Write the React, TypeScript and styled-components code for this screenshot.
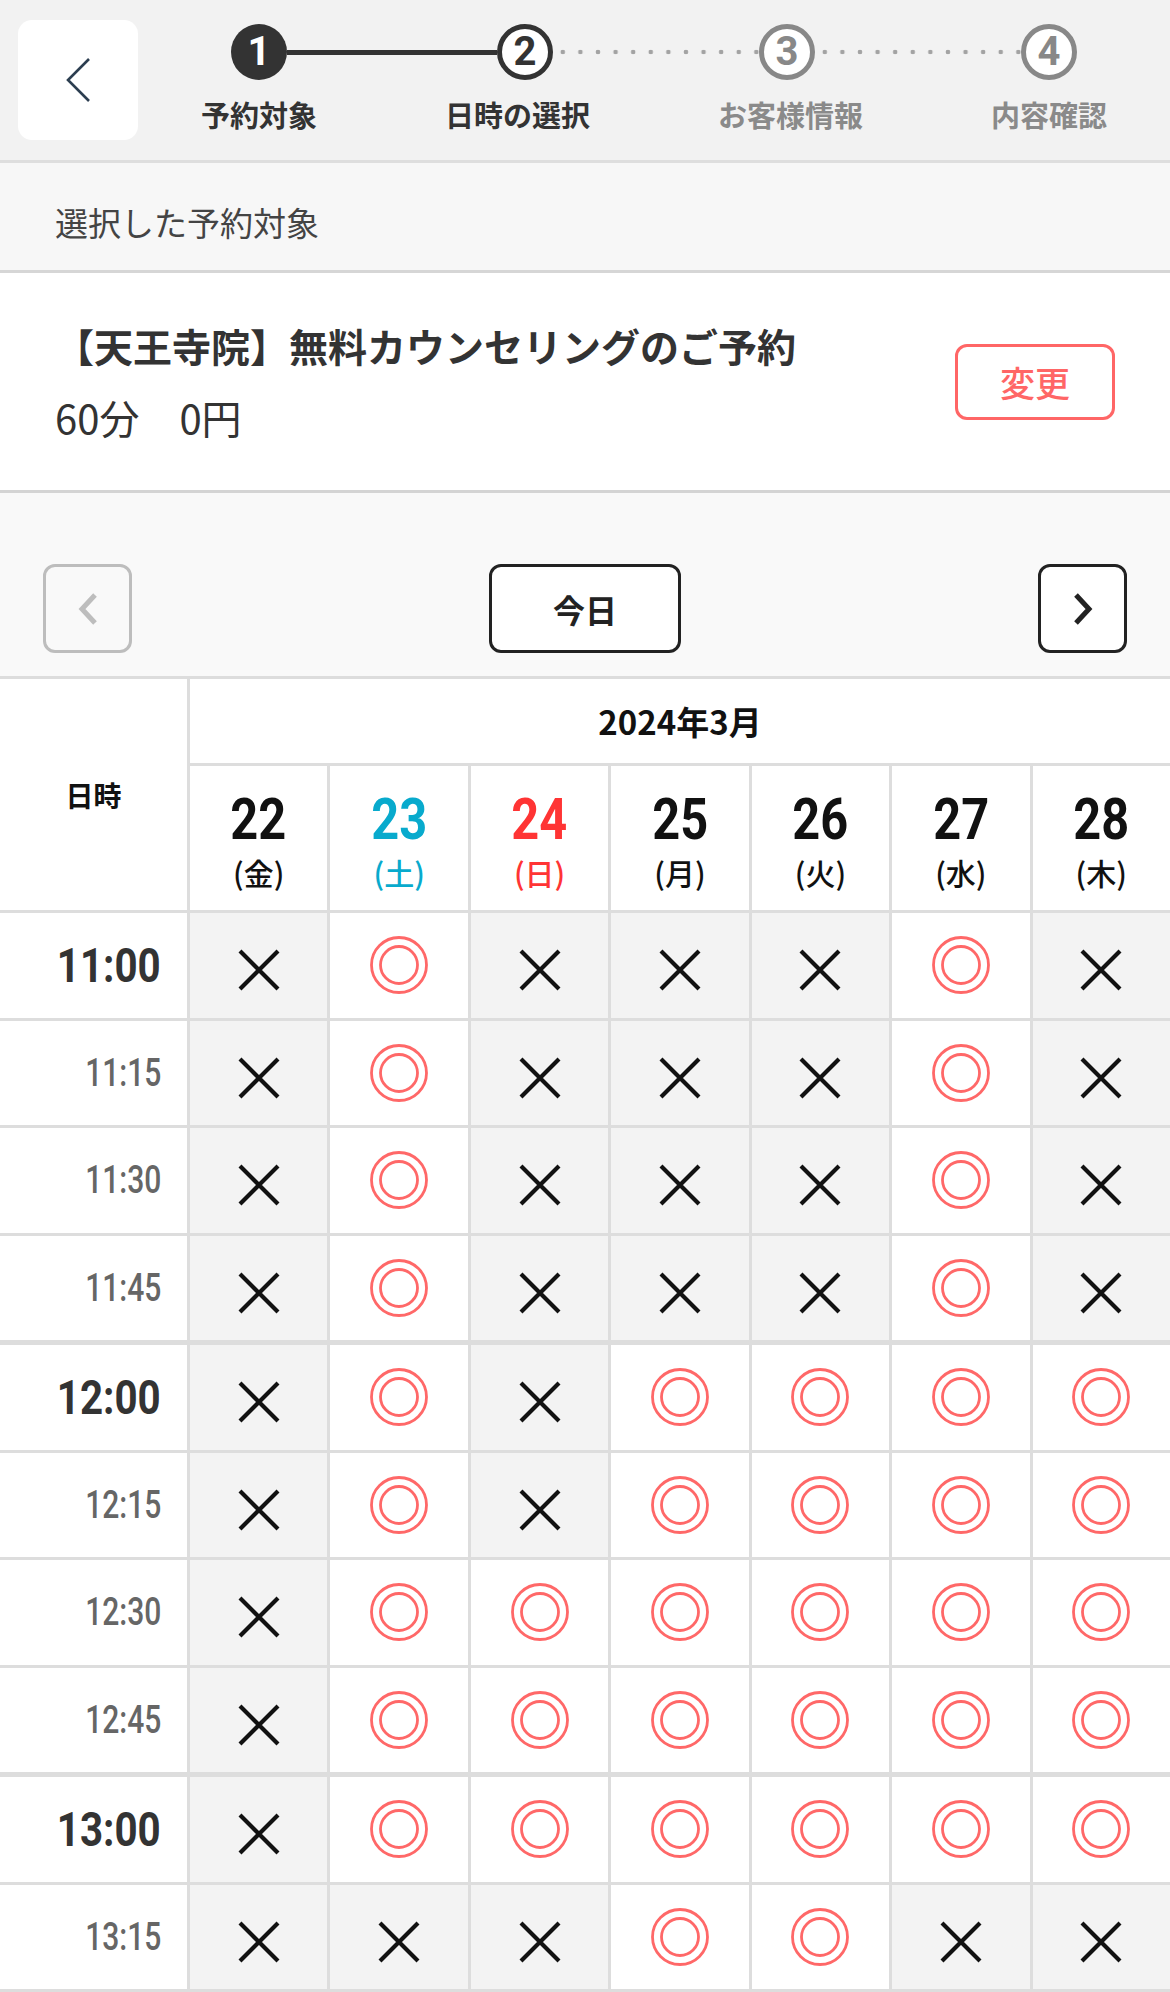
import React from 'react';
import styled, { createGlobalStyle, css } from 'styled-components';

type Slot = 'o' | 'x';

interface IDay {
	date: string;
	weekday: string;
	tone: 'plain' | 'sat' | 'sun';
}

interface IRow {
	time: string;
	slots: Slot[];
}

const days: IDay[] = [
	{ date: '22', tone: 'plain', weekday: '金' },
	{ date: '23', tone: 'sat', weekday: '土' },
	{ date: '24', tone: 'sun', weekday: '日' },
	{ date: '25', tone: 'plain', weekday: '月' },
	{ date: '26', tone: 'plain', weekday: '火' },
	{ date: '27', tone: 'plain', weekday: '水' },
	{ date: '28', tone: 'plain', weekday: '木' }
];

const parse = (s: string): Slot[] => s.split('') as Slot[];

const rows: IRow[] = [
	{ slots: parse('xoxxxox'), time: '11:00' },
	{ slots: parse('xoxxxox'), time: '11:15' },
	{ slots: parse('xoxxxox'), time: '11:30' },
	{ slots: parse('xoxxxox'), time: '11:45' },
	{ slots: parse('xoxoooo'), time: '12:00' },
	{ slots: parse('xoxoooo'), time: '12:15' },
	{ slots: parse('xoooooo'), time: '12:30' },
	{ slots: parse('xoooooo'), time: '12:45' },
	{ slots: parse('xoooooo'), time: '13:00' },
	{ slots: parse('xxxooxx'), time: '13:15' }
];

const steps = [
	{ label: '予約対象', num: '1', state: 'done' },
	{ label: '日時の選択', num: '2', state: 'current' },
	{ label: 'お客様情報', num: '3', state: 'todo' },
	{ label: '内容確認', num: '4', state: 'todo' }
] as const;

type StepState = typeof steps[number]['state'];

const toneColor = { plain: '#111', sat: '#08aacd', sun: '#ff3434' };

const GlobalStyle = createGlobalStyle`
	html, body { margin: 0; padding: 0; background: #fff; }
	body { font-family: 'Noto Sans CJK JP', 'Noto Sans', sans-serif; color: #333; }
	* { box-sizing: border-box; }
	button { font-family: inherit; cursor: pointer; }
`;

const Page = styled.div`
	width: 1170px;
`;

/* ---------- header / stepper ---------- */

const Header = styled.header`
	display: flex;
	height: 163px;
	padding: 20px 0 0 18px;
	background: #f2f2f2;
	border-bottom: 3px solid #dedede;
`;

const BackButton = styled.button`
	flex: none;
	width: 120px;
	height: 120px;
	padding: 0;
	border: none;
	border-radius: 14px;
	background: #fff;
	display: flex;
	align-items: center;
	justify-content: center;
`;

const Stepper = styled.div`
	flex: 1;
	padding: 4px 63px 0;
	display: flex;
	flex-direction: column;
`;

const CircleRow = styled.div`
	display: flex;
	align-items: center;
	padding: 0 30px;
`;

const StepCircle = styled.div<{ $state: StepState }>`
	flex: none;
	width: 56px;
	height: 56px;
	border-radius: 50%;
	display: flex;
	align-items: center;
	justify-content: center;
	font-family: Roboto, 'Liberation Sans', sans-serif;
	font-weight: 700;
	font-size: 40px;
	line-height: 1;
	${({ $state }) => $state === 'done' && css`
		background: #333;
		color: #fff;
	`}
	${({ $state }) => $state === 'current' && css`
		background: #fff;
		border: 5px solid #333;
		color: #333;
	`}
	${({ $state }) => $state === 'todo' && css`
		background: #fff;
		border: 5px solid #888;
		color: #888;
	`}
`;

const Connector = styled.div<{ $solid: boolean }>`
	flex: 1;
	${({ $solid }) => $solid
		? css`
			height: 5px;
			background: #333;
		`
		: css`
			height: 6px;
			margin: 0 -2px;
			background: radial-gradient(circle, #a3a3a3 2px, transparent 2.6px) 3px center / 17.6px 6px repeat-x;
		`}
`;

const LabelRow = styled.div`
	display: flex;
	justify-content: space-between;
	margin-top: 15px;
`;

const StepLabel = styled.span<{ $muted: boolean }>`
	font-size: 29px;
	line-height: 39px;
	font-weight: 700;
	color: ${({ $muted }) => ($muted ? '#8a8a8a' : '#333')};
`;

/* ---------- selected target ---------- */

const SectionBar = styled.div`
	height: 110px;
	padding: 10px 0 0 55px;
	display: flex;
	align-items: center;
	background: #f7f7f7;
	border-bottom: 3px solid #d6d6d6;
	font-size: 33px;
	color: #444;
`;

const Card = styled.section`
	height: 220px;
	padding: 0 55px;
	display: flex;
	align-items: center;
	justify-content: space-between;
	background: #fff;
	border-bottom: 3px solid #d4d4d4;
`;

const Info = styled.div`
	display: flex;
	flex-direction: column;
	gap: 19px;
`;

const Title = styled.h2`
	margin: 0;
	font-size: 39px;
	line-height: 53px;
	font-weight: 700;
	color: #333;
`;

const Price = styled.p`
	margin: 0;
	font-size: 40px;
	line-height: 53px;
	color: #333;
`;

const ChangeButton = styled.button`
	width: 160px;
	height: 76px;
	border: 3px solid #ff6666;
	border-radius: 12px;
	background: #fff;
	color: #ff6666;
	font-size: 35px;
	font-weight: 500;
	padding: 0;
`;

/* ---------- week navigation ---------- */

const Nav = styled.nav`
	height: 186px;
	padding: 0 43px 23px;
	display: flex;
	align-items: flex-end;
	justify-content: space-between;
	background: #f9f9f9;
	border-bottom: 3px solid #dddddd;
`;

const NavButton = styled.button<{ $disabled?: boolean; $wide?: boolean }>`
	width: ${({ $wide }) => ($wide ? '192px' : '89px')};
	height: 89px;
	padding: 0;
	border-radius: 12px;
	border: 3px solid ${({ $disabled }) => ($disabled ? '#bdbdbd' : '#222')};
	background: ${({ $disabled }) => ($disabled ? 'transparent' : '#fff')};
	color: #222;
	font-size: 32px;
	font-weight: 700;
	display: flex;
	align-items: center;
	justify-content: center;
`;

/* ---------- schedule table ---------- */

const Table = styled.div`
	display: flex;
	flex-direction: column;
	gap: 3px;
	padding-bottom: 3px;
	background: #dddddd;
`;

const HeadGrid = styled.div`
	display: grid;
	grid-template-columns: 187px repeat(7, 1fr);
	grid-template-rows: 84px 144px;
	gap: 3px;
`;

const CornerCell = styled.div`
	grid-row: 1 / 3;
	background: #fff;
	display: flex;
	align-items: center;
	justify-content: center;
	font-size: 28px;
	font-weight: 700;
	color: #111;
`;

const MonthCell = styled.div`
	grid-column: 2 / -1;
	background: #fff;
	display: flex;
	align-items: center;
	justify-content: center;
	font-size: 33px;
	font-weight: 700;
	color: #111;
`;

const DayCell = styled.div<{ $color: string }>`
	background: #fff;
	display: flex;
	flex-direction: column;
	align-items: center;
	justify-content: center;
	padding-top: 4px;
	color: ${({ $color }) => $color};
`;

const DayNumber = styled.span`
	display: inline-block;
	font-family: Roboto, 'Liberation Sans', sans-serif;
	font-weight: 700;
	font-size: 58px;
	line-height: 52px;
	transform: scaleX(0.84);
`;

const Weekday = styled.span`
	margin-top: 12px;
	font-size: 30px;
	line-height: 30px;
	font-weight: 500;
`;

const Row = styled.div<{ $hourStart: boolean }>`
	display: grid;
	grid-template-columns: 187px repeat(7, 1fr);
	column-gap: 3px;
	height: 104.5px;
	margin-top: ${({ $hourStart }) => ($hourStart ? '2px' : '0')};
`;

const TimeCell = styled.div`
	background: #fff;
	display: flex;
	align-items: center;
	justify-content: flex-end;
	padding-right: 26px;
`;

const TimeLabel = styled.span<{ $hour: boolean }>`
	display: inline-block;
	font-family: Roboto, 'Liberation Sans', sans-serif;
	transform-origin: right center;
	${({ $hour }) => $hour
		? css`
			font-size: 48px;
			font-weight: 700;
			color: #333;
			transform: scaleX(0.84);
		`
		: css`
			font-size: 38px;
			font-weight: 500;
			color: #666;
			transform: scaleX(0.79);
		`}
`;

const SlotCell = styled.div<{ $closed: boolean }>`
	background: ${({ $closed }) => ($closed ? '#f3f3f3' : '#fff')};
	display: flex;
	align-items: center;
	justify-content: center;
`;

const CrossMark = styled.svg`
	margin-top: 10px;
`;

/* ---------- icons ---------- */

const BackIcon = () => (
	<svg width="26" height="46" viewBox="0 0 26 46" fill="none">
		<polyline points="24,2 3,23 24,44" stroke="#2c3e50" strokeWidth="2.6" />
	</svg>
);

const Chevron = ({ dir, color }: { dir: 'left' | 'right'; color: string }) => (
	<svg width="24" height="34" viewBox="0 0 24 34" fill="none">
		<polyline
			points={dir === 'right' ? '5,3 18,17 5,31' : '19,3 6,17 19,31'}
			stroke={color}
			strokeWidth="5"
		/>
	</svg>
);

const Cross = () => (
	<CrossMark width="42" height="42" viewBox="0 0 42 42">
		<path d="M2 2 L40 40 M40 2 L2 40" stroke="#111" strokeWidth="4.2" />
	</CrossMark>
);

const DoubleCircle = () => (
	<svg width="60" height="60" viewBox="0 0 60 60" fill="none">
		<circle cx="30" cy="30" r="27.5" stroke="#ff6868" strokeWidth="2.8" />
		<circle cx="30" cy="30" r="18.5" stroke="#ff6868" strokeWidth="2.8" />
	</svg>
);

const App = () => (
	<Page>
		<GlobalStyle />
		<Header>
			<BackButton aria-label="戻る"><BackIcon /></BackButton>
			<Stepper>
				<CircleRow>
					{steps.map((step, i) => (
						<React.Fragment key={step.num}>
							{i > 0 && <Connector $solid={step.state !== 'todo'} />}
							<StepCircle $state={step.state}>{step.num}</StepCircle>
						</React.Fragment>
					))}
				</CircleRow>
				<LabelRow>
					{steps.map((step) => (
						<StepLabel key={step.num} $muted={step.state === 'todo'}>{step.label}</StepLabel>
					))}
				</LabelRow>
			</Stepper>
		</Header>

		<SectionBar>選択した予約対象</SectionBar>

		<Card>
			<Info>
				<Title>【天王寺院】無料カウンセリングのご予約</Title>
				<Price>60分　0円</Price>
			</Info>
			<ChangeButton>変更</ChangeButton>
		</Card>

		<Nav>
			<NavButton $disabled aria-label="前の週"><Chevron dir="left" color="#bdbdbd" /></NavButton>
			<NavButton $wide>今日</NavButton>
			<NavButton aria-label="次の週"><Chevron dir="right" color="#222" /></NavButton>
		</Nav>

		<Table>
			<HeadGrid>
				<CornerCell>日時</CornerCell>
				<MonthCell>2024年3月</MonthCell>
				{days.map((day) => (
					<DayCell key={day.date} $color={toneColor[day.tone]}>
						<DayNumber>{day.date}</DayNumber>
						<Weekday>({day.weekday})</Weekday>
					</DayCell>
				))}
			</HeadGrid>
			{rows.map((row, i) => {
				const hour = row.time.endsWith(':00');
				return (
					<Row key={row.time} $hourStart={hour && i > 0}>
						<TimeCell>
							<TimeLabel $hour={hour}>{row.time}</TimeLabel>
						</TimeCell>
						{row.slots.map((slot, j) => (
							<SlotCell key={j} $closed={slot === 'x'}>
								{slot === 'x' ? <Cross /> : <DoubleCircle />}
							</SlotCell>
						))}
					</Row>
				);
			})}
		</Table>
	</Page>
);

export default App;
